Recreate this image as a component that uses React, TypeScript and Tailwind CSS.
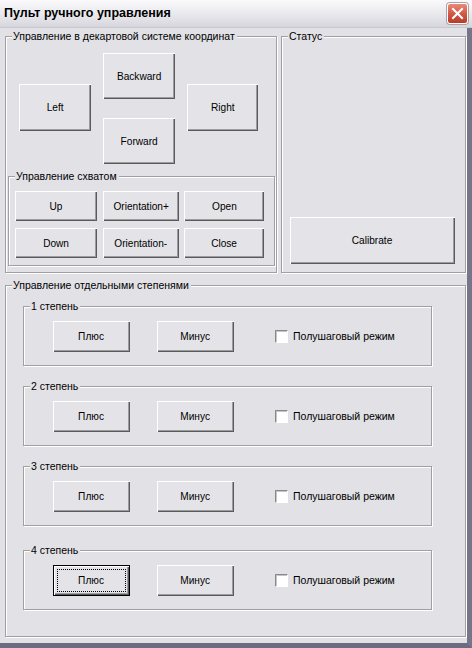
import React from "react";

const FONT = { fontFamily: '"Liberation Sans", Arial, sans-serif' };

function Btn({ label, className = "", focused = false }: { label: string; className?: string; focused?: boolean }) {
  return (
    <div
      className={`relative flex items-center justify-center bg-[#e4e4e8] text-[11px] leading-[13px] text-black ${
        focused
          ? "border border-black shadow-[inset_1px_1px_0_#ffffff,inset_-1px_-1px_0_#5a5a5a,inset_-2px_-2px_0_#9d9d9d]"
          : "shadow-[inset_1px_1px_0_#ffffff,inset_-1px_-1px_0_#5a5a5a,inset_-2px_-2px_0_#9d9d9d]"
      } ${className}`}
    >
      {focused && <span className="absolute inset-[3px] border border-dotted border-black" />}
      <span className="inline-block scale-x-[0.92]">{label}</span>
    </div>
  );
}

function Group({ label, className = "", children }: { label: string; className?: string; children?: React.ReactNode }) {
  return (
    <div className={`relative border border-[#a0a0a4] shadow-[1px_1px_0_#ffffff,inset_1px_1px_0_#ffffff] ${className}`}>
      <span className="absolute left-[6px] -top-[7px] bg-[#e2e2e6] pl-[1px] pr-[2px] text-[10.5px] leading-[13px] text-black whitespace-nowrap">
        {label}
      </span>
      {children}
    </div>
  );
}

function Checkbox() {
  return (
    <div className="h-[13px] w-[13px] bg-white border border-t-[#8a8a8e] border-l-[#8a8a8e] border-r-[#ffffff] border-b-[#ffffff] shadow-[inset_1px_1px_0_#c4c4c8]" />
  );
}

function Stage({ label, className = "", focused = false }: { label: string; className?: string; focused?: boolean }) {
  return (
    <Group label={label} className={`w-[409px] h-[60px] ${className}`}>
      <div className="flex items-center pl-[29px] pt-[14px]">
        <Btn label="Плюс" className="w-[77px] h-[31px]" focused={focused} />
        <Btn label="Минус" className="ml-[27px] w-[77px] h-[31px]" />
        <div className="ml-[41px]">
          <Checkbox />
        </div>
        <span className="ml-[5px] text-[10.5px] leading-[13px] text-black">Полушаговый режим</span>
      </div>
    </Group>
  );
}

export default function App() {
  return (
    <div style={FONT} className="w-[472px] h-[648px] flex flex-col bg-[#e2e2e6] overflow-hidden">
      {/* Title bar */}
      <div className="h-[28px] flex items-center justify-between pl-[4px] pr-[4px] bg-gradient-to-b from-[#fafafc] via-[#eaeaee] to-[#d6d6dc] border-b border-[#c8c8d0]">
        <span className="text-[12.5px] font-bold text-black leading-none">Пульт ручного управления</span>
        <div className="h-[21px] w-[21px] rounded-[3px] border border-white bg-gradient-to-b from-[#e98a78] via-[#d25a46] to-[#b8392a] flex items-center justify-center shadow-[0_0_0_1px_#b0a0a0]">
          <svg width="13" height="13" viewBox="0 0 13 13">
            <path d="M2 2 L11 11 M11 2 L2 11" stroke="#ffffff" strokeWidth="2" strokeLinecap="square" />
          </svg>
        </div>
      </div>

      {/* Body */}
      <div className="flex-1 flex flex-col pl-[5px] pt-[8px] border-r-[5px] border-b-[5px] border-r-[#76768a] border-b-[#6c6c80]">
        <div className="flex gap-[4px]">
          <Group label="Управление в декартовой системе координат" className="w-[272px] h-[237px]">
            <div className="flex items-start pl-[13px] pt-[16px]">
              <Btn label="Left" className="mt-[31px] w-[72px] h-[47px]" />
              <div className="ml-[12px] flex flex-col">
                <Btn label="Backward" className="w-[72px] h-[46px]" />
                <Btn label="Forward" className="mt-[19px] w-[72px] h-[46px]" />
              </div>
              <Btn label="Right" className="ml-[12px] mt-[31px] w-[71px] h-[47px]" />
            </div>
            <Group label="Управление схватом" className="ml-[2px] mt-[12px] w-[267px] h-[90px]">
              <div className="flex flex-col gap-[7px] pl-[6px] pt-[14px]">
                <div className="flex">
                  <Btn label="Up" className="w-[82px] h-[30px]" />
                  <Btn label="Orientation+" className="ml-[6px] w-[76px] h-[30px]" />
                  <Btn label="Open" className="ml-[5px] w-[80px] h-[30px]" />
                </div>
                <div className="flex">
                  <Btn label="Down" className="w-[82px] h-[30px]" />
                  <Btn label="Orientation-" className="ml-[6px] w-[76px] h-[30px]" />
                  <Btn label="Close" className="ml-[5px] w-[80px] h-[30px]" />
                </div>
              </div>
            </Group>
          </Group>

          <Group label="Статус" className="w-[185px] h-[237px] flex flex-col justify-end pb-[8px] pl-[8px]">
            <Btn label="Calibrate" className="w-[165px] h-[47px]" />
          </Group>
        </div>

        <Group label="Управление отдельными степенями" className="mt-[12px] w-[461px] h-[352px]">
          <div className="flex flex-col pl-[17px] pt-[20px]">
            <Stage label="1 степень" />
            <Stage label="2 степень" className="mt-[20px]" />
            <Stage label="3 степень" className="mt-[20px]" />
            <Stage label="4 степень" className="mt-[24px]" focused />
          </div>
        </Group>
      </div>
    </div>
  );
}
